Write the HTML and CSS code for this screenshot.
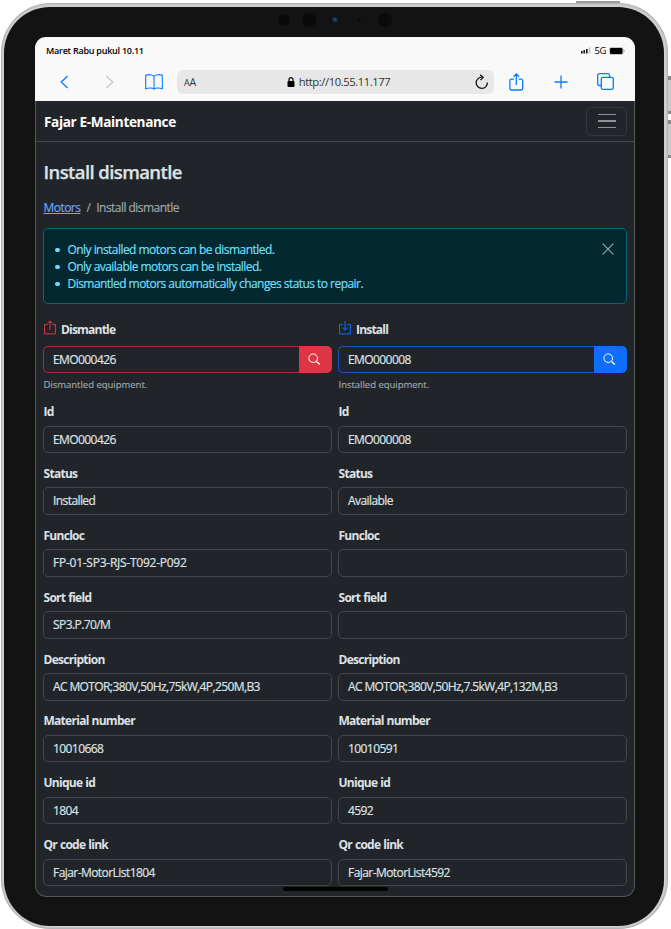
FILE: index.html
```html
<!DOCTYPE html>
<html lang="en">
<head>
<meta charset="utf-8">
<title>Install dismantle</title>
<link rel="stylesheet" href="styles.css">
</head>
<body>
<div class="device">
  <i class="hw power"></i><i class="hw vol-up"></i><i class="hw vol-down"></i>
  <div class="bezel">
    <i class="cam cam-a"></i><i class="cam cam-b"></i><i class="cam cam-c"></i><i class="cam cam-d"></i><i class="cam cam-e"></i>
    <div class="screen">
      <header class="browser">
        <div class="status-bar">
          <span class="clock">Maret Rabu pukul 10.11</span>
          <span class="signal">
            <svg width="10" height="7" viewBox="0 0 10 7"><path d="M0 4h1.6v2.5H0zM2.4 3h1.6v3.5H2.4zM5 2h1.6v4.5H5z" fill="#111"/><path d="M7.800 .5h1.500v6H7.800z" fill="#bbb"/></svg>
            <span class="net">5G</span>
            <svg width="16" height="8" viewBox="0 0 16 8"><rect x=".4" y=".4" width="13.600" height="7.200" rx="1.800" fill="none" stroke="#aaa" stroke-width=".7"/><rect x="1" y="1" width="12.500" height="6" rx="1.200"/><path d="M15 3v2" stroke="#999"/></svg>
          </span>
        </div>
        <div class="toolbar">
          <svg class="back" width="9" height="14" viewBox="0 0 9 14"><path d="M7.600 1 1.200 7l6.400 6"/></svg>
          <svg class="forward" width="9" height="14" viewBox="0 0 9 14"><path d="M1.400 1 7.800 7l-6.400 6"/></svg>
          <svg class="book" width="18" height="16" viewBox="0 0 18 16"><path d="M9 2.500C8 .4 3 .2.700 1.300v13.400c2.600-1 6.800-1 8.300.300 1.500-1.300 5.700-1.300 8.300-.3V1.300C15 .200 10 .4 9 2.500zV15"/></svg>
          <div class="address">
            <span class="aa"><small>A</small>A</span>
            <span class="url"><svg width="8" height="10" viewBox="0 0 8 10"><rect x=".5" y="4" width="7" height="6" rx="1"/><path d="M2 4.500V2.700a2 2 0 0 1 4 0v1.800" fill="none" stroke="#000" stroke-width="1.200"/></svg><span>http://10.55.11.177</span></span>
            <svg class="reload" width="14" height="16" viewBox="0 0 14 16"><path d="M6.800 3.200A5.600 5.600 0 1 0 12.400 8.600M5.200.7l3 2.600-2.700 2.800"/></svg>
          </div>
          <svg class="share" width="15" height="18" viewBox="0 0 15 18"><path d="M5 6.200H2.300A1.400 1.400 0 0 0 .900 7.600v8a1.400 1.400 0 0 0 1.400 1.400h10a1.400 1.400 0 0 0 1.400-1.400v-8a1.400 1.400 0 0 0-1.400-1.400H9.600M7.300 12V1M4.500 3.700 7.300 1l2.800 2.700"/></svg>
          <svg class="plus" width="14" height="14" viewBox="0 0 14 14"><path d="M7 .5v13M.5 7h13"/></svg>
          <svg class="tabs" width="17" height="17" viewBox="0 0 17 17"><path d="M4.300 12.500H2.300A1.600 1.600 0 0 1 .700 10.900V2.300A1.600 1.600 0 0 1 2.300.7h8.600a1.600 1.600 0 0 1 1.600 1.600v2"/><rect x="4.300" y="4.300" width="12" height="12" rx="1.600"/></svg>
        </div>
      </header>
      <nav class="navbar">
        <span class="brand">Fajar E-Maintenance</span>
        <button class="toggler" aria-label="Menu"><i></i><i></i><i></i></button>
      </nav>
      <main class="page">
        <h1>Install dismantle</h1>
        <div class="crumbs"><a>Motors</a><span class="slash">/</span><span>Install dismantle</span></div>
        <div class="alert">
          <ul>
            <li>Only installed motors can be dismantled.</li>
            <li>Only available motors can be installed.</li>
            <li>Dismantled motors automatically changes status to repair.</li>
          </ul>
          <svg class="close" width="12" height="12" viewBox="0 0 12 12"><path d="m.700.7 10.600 10.600M11.300.700.700 11.300"/></svg>
        </div>
        <div class="columns">
          <section class="col danger">
            <div class="title"><svg width="12" height="15" viewBox="0 0 12 15"><path d="M3.600 4.500H.6v9.400h10.800V4.500H8.400M6 10V1M3.500 3.400 6 .9l2.500 2.500"/></svg><span>Dismantle</span></div>
            <div class="search"><span class="box">EMO000426</span><span class="go"><svg width="13" height="13" viewBox="0 0 13 13"><circle cx="5.200" cy="5.200" r="4.300"/><path d="m8.500 8.500 3.300 3.100" stroke-width="1.400"/></svg></span></div>
            <div class="help">Dismantled equipment.</div>
            <label>Id</label><div class="box">EMO000426</div>
            <label>Status</label><div class="box">Installed</div>
            <label>Funcloc</label><div class="box code">FP-01-SP3-RJS-T092-P092</div>
            <label>Sort field</label><div class="box">SP3.P.70/M</div>
            <label>Description</label><div class="box long">AC MOTOR;380V,50Hz,75kW,4P,250M,B3</div>
            <label>Material number</label><div class="box">10010668</div>
            <label>Unique id</label><div class="box">1804</div>
            <label>Qr code link</label><div class="box link">Fajar-MotorList1804</div>
          </section>
          <section class="col primary">
            <div class="title"><svg width="12" height="15" viewBox="0 0 12 15"><path d="M3.600 4.500H.6v9.400h10.800V4.500H8.400M6 1v9M3.500 7.700 6 10.200l2.500-2.500"/></svg><span>Install</span></div>
            <div class="search"><span class="box">EMO000008</span><span class="go"><svg width="13" height="13" viewBox="0 0 13 13"><circle cx="5.200" cy="5.200" r="4.300"/><path d="m8.500 8.500 3.300 3.100" stroke-width="1.400"/></svg></span></div>
            <div class="help">Installed equipment.</div>
            <label>Id</label><div class="box">EMO000008</div>
            <label>Status</label><div class="box">Available</div>
            <label>Funcloc</label><div class="box"></div>
            <label>Sort field</label><div class="box"></div>
            <label>Description</label><div class="box long">AC MOTOR;380V,50Hz,7.5kW,4P,132M,B3</div>
            <label>Material number</label><div class="box">10010591</div>
            <label>Unique id</label><div class="box">4592</div>
            <label>Qr code link</label><div class="box link">Fajar-MotorList4592</div>
          </section>
        </div>
      </main>
      <i class="home-bar"></i>
    </div>
  </div>
</div>
</body>
</html>
```
FILE: styles.css
```css
* { box-sizing: border-box; }
body { margin: 0; width: 671px; height: 929px; overflow: hidden; background: #fff; font-family: "Open Sans", "Noto Sans", sans-serif; }
svg { display: block; flex: none; }
.device { position: relative; width: 667px; height: 926px; margin: 3px 0 0 1px; padding: 4px 4px 3px 3px; border-radius: 50px; background: #d0d0d1; box-shadow: inset 0 0 2px 1px #a9abad; }
.bezel { position: relative; height: 100%; border-radius: 46px; background: #131313; padding: 30px 29px 30px 31px; }
.screen { position: relative; width: 600px; height: 860px; border-radius: 11px; background: #212529; overflow: hidden; }
.screen::after { content: ""; position: absolute; inset: 0; border: 1px solid #53585d; border-top: 0; border-radius: 11px; clip-path: inset(64px 0 0 0); }

.hw { position: absolute; background: #c9cacb; }
.power { left: 575px; top: -2px; width: 44px; height: 2px; background: #9a9b9c; }
.vol-up { right: -3px; top: 73px; width: 3px; height: 38px; border-top: 4px solid #888; border-bottom: 3px solid #888; }
.vol-down { right: -3px; top: 117px; width: 3px; height: 38px; border-top: 4px solid #888; border-bottom: 3px solid #888; }
.cam { position: absolute; border-radius: 50%; background: #090b0b; }
.cam-a { left: 274px; top: 7px; width: 12px; height: 12px; }
.cam-b { left: 298px; top: 6px; width: 14px; height: 14px; }
.cam-c { left: 328px; top: 10px; width: 6px; height: 6px; background: radial-gradient(circle at 50% 40%, #1a4474 0 20%, #0c1a2c 75%); }
.cam-d { left: 354px; top: 11px; width: 3px; height: 3px; }
.cam-e { left: 374px; top: 6px; width: 14px; height: 14px; }

.browser { height: 64px; background: #f9f9f9; color: #000; }
.status-bar { height: 27px; padding: 0 10px 0 11px; display: flex; justify-content: space-between; align-items: center; font-size: 9px; font-weight: 600; }
.clock { letter-spacing: -.25px; }
.signal { display: flex; align-items: center; gap: 3px; }
.net { font-weight: 500; font-size: 9.5px; letter-spacing: -.4px; }
.toolbar { height: 35px; display: flex; align-items: center; padding-left: 25px; }
.toolbar > svg { fill: none; stroke: #087cff; stroke-width: 1.3; }
.toolbar .forward { stroke: #c7c7c9; margin-left: 36px; }
.toolbar .book { margin-left: 31px; stroke-width: 1.1; }
.address { width: 317px; height: 24px; margin-left: 14px; padding: 0 5px 0 7px; border-radius: 6px; background: #e7e7e7; display: flex; align-items: center; justify-content: space-between; color: #333; font-size: 11px; }
.aa { font-size: 10.5px; width: 14px; letter-spacing: -.3px; }
.aa small { font-size: 9px; }
.url { display: flex; align-items: center; gap: 4px; letter-spacing: -.4px; margin-left: 4px; }
.url span { font-size: 11.2px; }
.reload { fill: none; stroke: #111; stroke-width: 1.3; }
.share { margin-left: 15px; }
.plus { margin-left: 30px; }
.tabs { margin-left: 29px; }

.navbar { height: 41px; padding: 0 8px 0 9px; border-bottom: 1px solid #42464b; display: flex; align-items: center; justify-content: space-between; }
.brand { font-size: 13.6px; font-weight: 700; color: #fff; letter-spacing: -.37px; }
.toggler { width: 41px; height: 29px; padding: 0; border: 1px solid #33373b; border-radius: 5px; background: none; display: flex; flex-direction: column; gap: 5px; align-items: center; justify-content: center; }
.toggler i { width: 18px; height: 1.500px; background: #909395; }

.page { padding: 0 8px; color: #dee2e6; }
h1 { margin: 0; padding: 17px 0 0 .5px; font-size: 18.5px; line-height: 25px; font-weight: 600; letter-spacing: -.6px; -webkit-text-stroke: .25px; }
.crumbs { display: flex; margin: 16px 0 0 .5px; height: 16px; line-height: 16px; font-size: 12px; -webkit-text-stroke: .15px; letter-spacing: -.54px; color: #a4a8ac; }
.crumbs a { color: #6ea8fe; text-decoration: underline; }
.slash { margin: 0 6px; }
.alert { margin-top: 12px; height: 76px; padding: 12px; border: 1px solid #0b6475; border-radius: 5px; background: #032830; color: #6edff6; display: flex; justify-content: space-between; }
.alert ul { margin: 0; padding: 0 0 0 12px; font-size: 12px; -webkit-text-stroke: .2px; line-height: 17px; letter-spacing: -.545px; list-style: none; }
.alert li { display: flex; align-items: center; }
.alert li::before { content: ""; width: 4.500px; height: 4.500px; margin: 1px 8px 0 -13px; border-radius: 50%; background: #6edff6; }
.close { fill: none; stroke: #93a6aa; stroke-width: 1.2; margin-top: 2px; }

.columns { display: grid; grid-template-columns: 1fr 1fr; gap: 6px; padding-top: 15.500px; }
.col { font-size: 12px; min-width: 0; }
.title { height: 20px; display: flex; align-items: center; gap: 5px; margin-left: 1px; font-weight: 700; letter-spacing: -.8px; }
.title svg { fill: none; stroke: #dc3545; margin-top: -4px; }
.primary .title svg { stroke: #0d6efd; }
.search { display: flex; margin-top: 6px; }
.box { display: block; height: 27.500px; line-height: 26px; padding: 0 9px; border: 1px solid #42464b; border-radius: 5px; -webkit-text-stroke: .2px; letter-spacing: -.58px; white-space: nowrap; }
.code { letter-spacing: -.25px; }
.long { letter-spacing: -.61px; }
.link { letter-spacing: -.56px; }
.search .box { flex: 1; border-radius: 5px 0 0 5px; border-color: #a82d3a; border-right: 0; }
.primary .search .box { border-color: #1357bd; }
.go { width: 33px; display: flex; align-items: center; justify-content: center; border-radius: 0 5px 5px 0; background: #dc3545; }
.primary .go { background: #0d6efd; }
.go svg { fill: none; stroke: #fff; stroke-width: 1; margin-right: 2px; }
.help { height: 18px; padding: 3.500px 0 0 .5px; margin-bottom: 11px; font-size: 9.500px; -webkit-text-stroke: .15px; letter-spacing: -.02px; line-height: 15px; color: #a4a8ac; }
label { display: block; height: 23.500px; line-height: 19px; font-weight: 700; letter-spacing: -.72px; word-spacing: .5px; padding-left: .5px; }
label ~ label { margin-top: 10.900px; }
.home-bar { position: absolute; left: 248px; bottom: 6px; width: 105px; height: 4px; border-radius: 2px; background: #000; }
```
